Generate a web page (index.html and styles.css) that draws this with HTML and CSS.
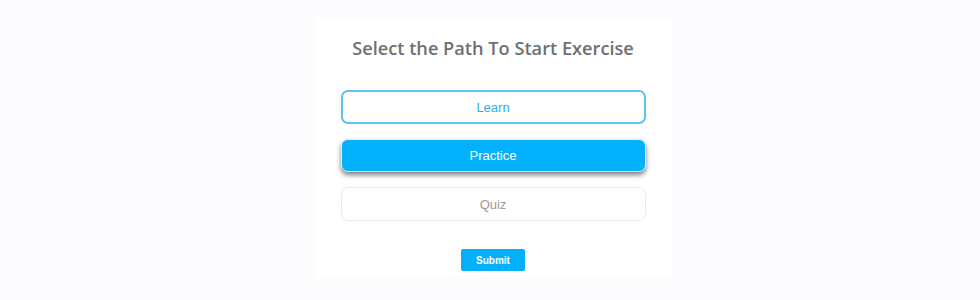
FILE: index.html
```html
<!DOCTYPE html>
<html>
<head>
<meta charset="utf-8">
<link rel="stylesheet" href="styles.css">
</head>
<body>
<div class="card">
  <h1 class="title">Select the Path To Start Exercise</h1>
  <div class="options">
    <button class="opt opt-learn">Learn</button>
    <button class="opt opt-practice">Practice</button>
    <button class="opt opt-quiz">Quiz</button>
  </div>
  <div class="actions">
    <button class="submit">Submit</button>
  </div>
</div>
</body>
</html>
```
FILE: styles.css
```css
html, body {
  margin: 0;
  padding: 0;
  background: #fcfbfd;
  height: 300px;
  overflow: hidden;
}
body {
  padding-left: 6px;
  box-sizing: border-box;
}
.card {
  width: 355px;
  margin: 20px auto 0;
  background: #ffffff;
  box-sizing: border-box;
  padding: 16px 25px 7px;
  height: 258px;
}
.title {
  margin: 0;
  font-family: "Open Sans", sans-serif;
  font-weight: 600;
  font-size: 18.2px;
  line-height: 24px;
  color: #707070;
  text-align: center;
}
.options {
  display: flex;
  flex-direction: column;
  gap: 15px;
  margin-top: 30px;
}
.opt {
  height: 34px;
  border-radius: 7px;
  font-family: "Liberation Sans", Arial, sans-serif;
  font-size: 13px;
  background: #fff;
  box-sizing: border-box;
  padding: 0;
  cursor: pointer;
}
.opt-learn {
  border: 2px solid #5cc3ec;
  color: #2bafe8;
}
.opt-practice {
  height: 33px;
  border: 1px solid #d6f1fd;
  background: #02b0fc;
  color: #ffffff;
  box-shadow: 0 3px 5px rgba(0,0,0,0.5);
}
.opt-quiz {
  border: 1px solid #ececec;
  color: #9a9a9a;
}
.actions {
  display: flex;
  justify-content: center;
  margin-top: 28px;
}
.submit {
  width: 64px;
  height: 22px;
  border: none;
  border-radius: 2px;
  background: #05b0fb;
  color: #fff;
  font-family: "Liberation Sans", Arial, sans-serif;
  font-weight: bold;
  font-size: 10px;
  padding: 0;
}
```
